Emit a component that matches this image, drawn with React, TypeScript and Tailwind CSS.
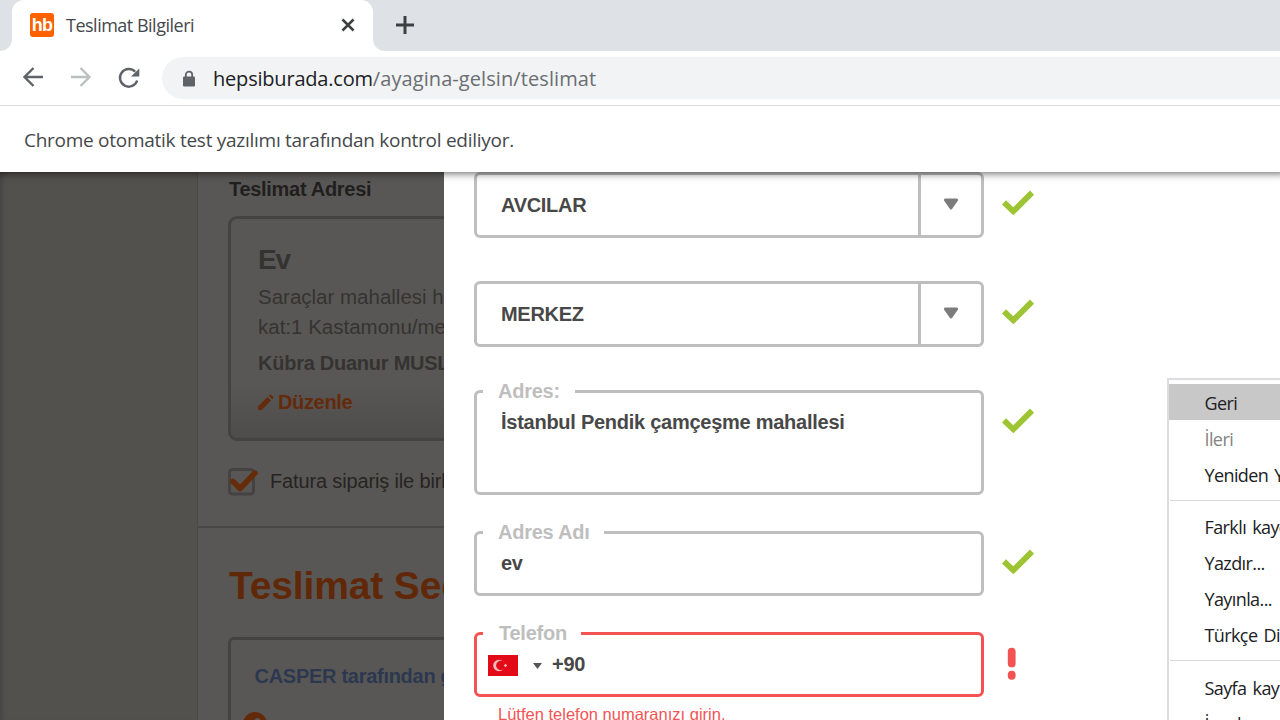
import React from "react";

const CheckIcon = () => (
  <svg className="h-[27px] w-[34px] shrink-0" viewBox="0 0 34 27">
    <path d="M3 13.3 L12.3 22.3 L31 3.6" fill="none" stroke="#9dc433" strokeWidth="5.8" />
  </svg>
);

const AlertIcon = () => (
  <svg className="h-[34px] w-[10px] shrink-0" viewBox="0 0 10 34">
    <rect x="0.8" y="0.7" width="7.8" height="19.6" rx="3.9" fill="#f45353" />
    <rect x="0.8" y="23.7" width="7.8" height="9" rx="3.9" fill="#f45353" />
  </svg>
);

const fieldBase = "relative flex w-[510px] shrink-0 rounded-[6px] border-[3px]";
const fieldText = "pt-[17px] text-[20px] leading-6 font-bold tracking-[-0.26px]";

function SelectField({ value }: { value: string }) {
  return (
    <div className="flex h-[66px] shrink-0 gap-[17px]">
      <div className={`${fieldBase} border-[#bebebe]`}>
        <span className="flex-1 pl-6 pt-[15px] text-[20px] leading-[30px] font-bold tracking-[-0.3px]">{value}</span>
        <span className="flex w-[63px] items-center justify-center border-l-[3px] border-[#bebebe]">
          <svg className="mb-[2px] h-[14px] w-[16px]" viewBox="0 0 16 14">
            <path d="M2.4 3 H13.6 L8 11 Z" fill="#7c7c7c" stroke="#7c7c7c" strokeWidth="3" strokeLinejoin="round" />
          </svg>
        </span>
      </div>
      <div className="pt-[17px]"><CheckIcon /></div>
    </div>
  );
}

function Label({ children, className }: { children: string; className: string }) {
  return (
    <span className={`absolute -top-[14px] left-[6px] h-6 bg-white text-[20px] leading-6 font-bold tracking-[-0.25px] text-[#bebebe] ${className}`}>
      {children}
    </span>
  );
}

function MenuItem({ children, className = "" }: { children: string; className?: string }) {
  return (
    <div className={`h-9 pl-[35.5px] text-[18px] leading-[38px] tracking-[-0.6px] whitespace-nowrap [word-spacing:2px] ${className}`}>
      {children}
    </div>
  );
}

function BrowserChrome() {
  return (
    <header className="relative z-10 h-[172px] shrink-0 bg-white font-['Open_Sans',sans-serif] shadow-[0_-5px_8px_6px_rgba(0,0,0,0.65)]">
      <div className="flex h-[51px] bg-white">
        <div className="w-3 rounded-br-[12px] bg-[#dee1e6]" />
        <div className="w-[361px] bg-[#dee1e6]">
          <div className="flex h-[51px] items-center rounded-t-[12px] bg-white pb-px pl-[18px]">
            <span className="flex h-6 w-6 items-center justify-center rounded-[3px] bg-[#ff6000] font-['Liberation_Sans',sans-serif] text-[18px] leading-6 font-bold tracking-[-0.8px] text-white">hb</span>
            <span className="ml-3 w-[270px] text-[18px] tracking-[-0.5px] text-[#45484c]">Teslimat Bilgileri</span>
            <svg className="ml-[5px] h-[14px] w-[14px]" viewBox="0 0 14 14">
              <path d="M1.5 1.5 L12.5 12.5 M12.5 1.5 L1.5 12.5" stroke="#3c4043" strokeWidth="2.5" />
            </svg>
          </div>
        </div>
        <div className="flex flex-1 items-center rounded-bl-[12px] bg-[#dee1e6] pb-px pl-[22px]">
          <svg className="h-5 w-5" viewBox="0 0 20 20">
            <path d="M10 1 V19 M1 10 H19" stroke="#3c4043" strokeWidth="3" />
          </svg>
        </div>
      </div>
      <div className="flex h-[55px] items-center border-b border-[#dadce0] pl-[22px]">
        <svg className="mb-[2px] h-[22px] w-[22px]" viewBox="0 0 22 22" fill="none" stroke="#5f6368" strokeWidth="2.4">
          <path d="M21 11 H2.5 M11.5 2 L2.5 11 L11.5 20" />
        </svg>
        <svg className="mb-[2px] ml-[26px] h-[22px] w-[22px]" viewBox="0 0 22 22" fill="none" stroke="#bcbec0" strokeWidth="2.4">
          <path d="M1 11 H19.5 M10.5 2 L19.5 11 L10.5 20" />
        </svg>
        <svg className="mb-px ml-[25px] h-6 w-6" viewBox="0 0 24 24">
          <path d="M20.2 14.5 A8.8 8.8 0 1 1 18.2 5.8" fill="none" stroke="#5f6368" strokeWidth="2.4" />
          <path d="M22.3 2.4 V10.4 H14 Z" fill="#5f6368" />
        </svg>
        <div className="ml-[21px] flex h-[42px] flex-1 items-center rounded-l-full bg-[#f1f3f4] pl-[20px]">
          <svg className="mt-px h-[18px] w-[14px]" viewBox="0 0 14 18">
            <path d="M3.8 8 V4.8 a3.2 3.2 0 0 1 6.4 0 V8" fill="none" stroke="#5f6368" strokeWidth="1.8" />
            <rect x="1" y="6.5" width="12" height="10" rx="1.2" fill="#5f6368" />
          </svg>
          <span className="ml-[17px] pt-[2px] text-[20px] text-[#6b6e72]">
            <span className="tracking-[-0.2px] text-[#202124]">hepsiburada.com</span><span className="tracking-[0.08px]">/ayagina-gelsin/teslimat</span>
          </span>
        </div>
      </div>
      <div className="flex h-[66px] items-center pl-6 pt-[2px]">
        <span className="text-[19px] tracking-[-0.27px] text-[#45484b]">Chrome otomatik test yazılımı tarafından kontrol ediliyor.</span>
      </div>
    </header>
  );
}

function DimmedPage() {
  return (
    <aside className="flex w-[444px] shrink-0 overflow-hidden bg-[#53514e] whitespace-nowrap shadow-[inset_5px_0_5px_-3px_rgba(0,0,0,0.18)]">
      <div className="w-[197px] shrink-0" />
      <div className="flex w-[600px] shrink-0 flex-col border-l border-[#4b4947] bg-[#595755]">
        <section className="h-[356px] shrink-0 border-b-2 border-[#4a4846] pl-[30px]">
          <h2 className="h-[44px] pt-[2px] pl-px text-[20px] leading-[30px] font-bold tracking-[-0.3px] text-[#211f1e]">Teslimat Adresi</h2>
          <div className="h-[225px] w-[500px] rounded-[9px] border-[3px] border-[#454341] bg-gradient-to-b from-[#595755] from-75% to-[#4f4d4b] pl-[27px] text-[#353331]">
            <h3 className="h-[63px] pt-[21px] text-[28px] leading-[40px] font-bold tracking-[-1.2px]">Ev</h3>
            <p className="text-[20.5px] leading-[30px]">Saraçlar mahallesi halk<br />kat:1 Kastamonu/merkez</p>
            <p className="mt-[6px] text-[20px] leading-[30px] font-bold tracking-[-0.25px]">Kübra Duanur MUSLU</p>
            <div className="mt-[9px] flex items-center gap-1 text-[#642a0b]">
              <svg className="h-4 w-4" viewBox="0 0 16 16" fill="currentColor">
                <path d="M0 12.5 L9.5 3 L13 6.5 L3.5 16 H0 Z M10.8 1.7 L11.7 .7 Q12.3 .1 13 .7 L15.2 2.9 Q15.8 3.6 15.2 4.3 L14.2 5.2 Z" />
              </svg>
              <span className="text-[20px] leading-[30px] font-bold tracking-[-0.35px]">Düzenle</span>
            </div>
          </div>
          <div className="mt-[27px] flex h-7 items-center">
            <svg className="h-[29px] w-[31px]" viewBox="0 0 31 29">
              <rect x="1.5" y="1.5" width="24" height="24.5" rx="3" fill="none" stroke="#454341" strokeWidth="3" />
              <path d="M5 13.5 L12 20.5 L27 5" fill="none" stroke="#662b08" strokeWidth="5.5" strokeLinecap="round" strokeLinejoin="round" />
            </svg>
            <span className="ml-[11px] pb-[2px] text-[20px] leading-[30px] tracking-[-0.15px] text-[#262422]">Fatura sipariş ile birlikte</span>
          </div>
        </section>
        <section className="pl-[30px]">
          <h1 className="h-[109px] pt-[34px] pl-px text-[39px] leading-[48px] font-bold tracking-[-0.15px] text-[#602808]">Teslimat Seçenekleri</h1>
          <div className="h-[200px] w-[500px] rounded-[6px] border-[3px] border-[#454341] pl-[23px] pt-[21px]">
            <p className="pl-[0.5px] text-[20px] leading-[30px] font-bold tracking-[-0.28px] text-[#2b3850]">CASPER tarafından gönderilecektir</p>
            <svg className="mt-[21px] -ml-[11px] h-6 w-6" viewBox="0 0 24 24">
              <circle cx="12" cy="12" r="12" fill="#632a09" />
              <circle cx="14.5" cy="9" r="3" fill="#595755" />
            </svg>
          </div>
        </section>
      </div>
    </aside>
  );
}

export default function App() {
  return (
    <div className="relative flex h-[720px] w-[1280px] flex-col overflow-hidden bg-white font-['Liberation_Sans',sans-serif]">
      <BrowserChrome />
      <div className="flex h-[548px] shrink-0 overflow-hidden">
        <DimmedPage />
        <main className="flex flex-1 flex-col pl-[30px] text-[#484848]">
          <SelectField value="AVCILAR" />
          <div className="mt-[43px] shrink-0"><SelectField value="MERKEZ" /></div>
          <div className="mt-[43px] flex shrink-0 gap-[17px]">
            <div className={`${fieldBase} ${fieldText} h-[105px] border-[#bebebe] pl-6`}>
              <Label className="w-[92px] pl-[15px]">Adres:</Label>
              İstanbul Pendik çamçeşme mahallesi
            </div>
            <div className="pt-[17px]"><CheckIcon /></div>
          </div>
          <div className="mt-9 flex shrink-0 gap-[17px]">
            <div className={`${fieldBase} ${fieldText} h-[65px] border-[#bebebe] pl-6`}>
              <Label className="w-[121px] pl-[15px]">Adres Adı</Label>
              ev
            </div>
            <div className="pt-[17px]"><CheckIcon /></div>
          </div>
          <div className="mt-9 flex shrink-0 gap-[23px]">
            <div className={`${fieldBase} ${fieldText} h-[65px] border-[#f45353] pl-[11px]`}>
              <Label className="w-[98px] pl-4">Telefon</Label>
              <svg className="mt-[3px] h-[21px] w-[30px]" viewBox="0 0 30 21">
                <rect width="30" height="21" fill="#e30a17" />
                <circle cx="11" cy="10.5" r="5.8" fill="#f7bcc0" />
                <circle cx="12.8" cy="10.5" r="4.7" fill="#e30a17" />
                <path d="M17.5 8.7 L19.1 10.5 L17.5 12.3 L15.8 10.5 Z" fill="#f7bcc0" />
              </svg>
              <svg className="mt-[11px] ml-[15px] h-[6px] w-[9px]" viewBox="0 0 9 6"><path d="M0 0 H9 L4.5 6 Z" fill="#555" /></svg>
              <span className="ml-[10px]">+90</span>
            </div>
            <div className="pt-[15px]"><AlertIcon /></div>
          </div>
          <p className="mt-[5px] shrink-0 pl-6 text-[16.5px] leading-6 text-[#f45353]">Lütfen telefon numaranızı girin.</p>
        </main>
      </div>
      <nav className="absolute top-[378px] left-[1167px] h-[400px] w-[300px] border-2 border-[#dddde1] bg-white pt-1 font-['Open_Sans',sans-serif] text-[#202124]">
        <MenuItem className="bg-[#c8c8c8]">Geri</MenuItem>
        <MenuItem className="text-[#838383]">İleri</MenuItem>
        <MenuItem>Yeniden Yükle</MenuItem>
        <div className="mt-2 mb-[7px] ml-px h-px bg-[#d9dadd]" />
        <MenuItem>Farklı kaydet...</MenuItem>
        <MenuItem>Yazdır...</MenuItem>
        <MenuItem>Yayınla...</MenuItem>
        <MenuItem>Türkçe Diline çevir</MenuItem>
        <div className="mt-2 mb-2 ml-px h-px bg-[#d9dadd]" />
        <MenuItem>Sayfa kaynağını görüntüle</MenuItem>
        <MenuItem>İncele</MenuItem>
      </nav>
    </div>
  );
}
